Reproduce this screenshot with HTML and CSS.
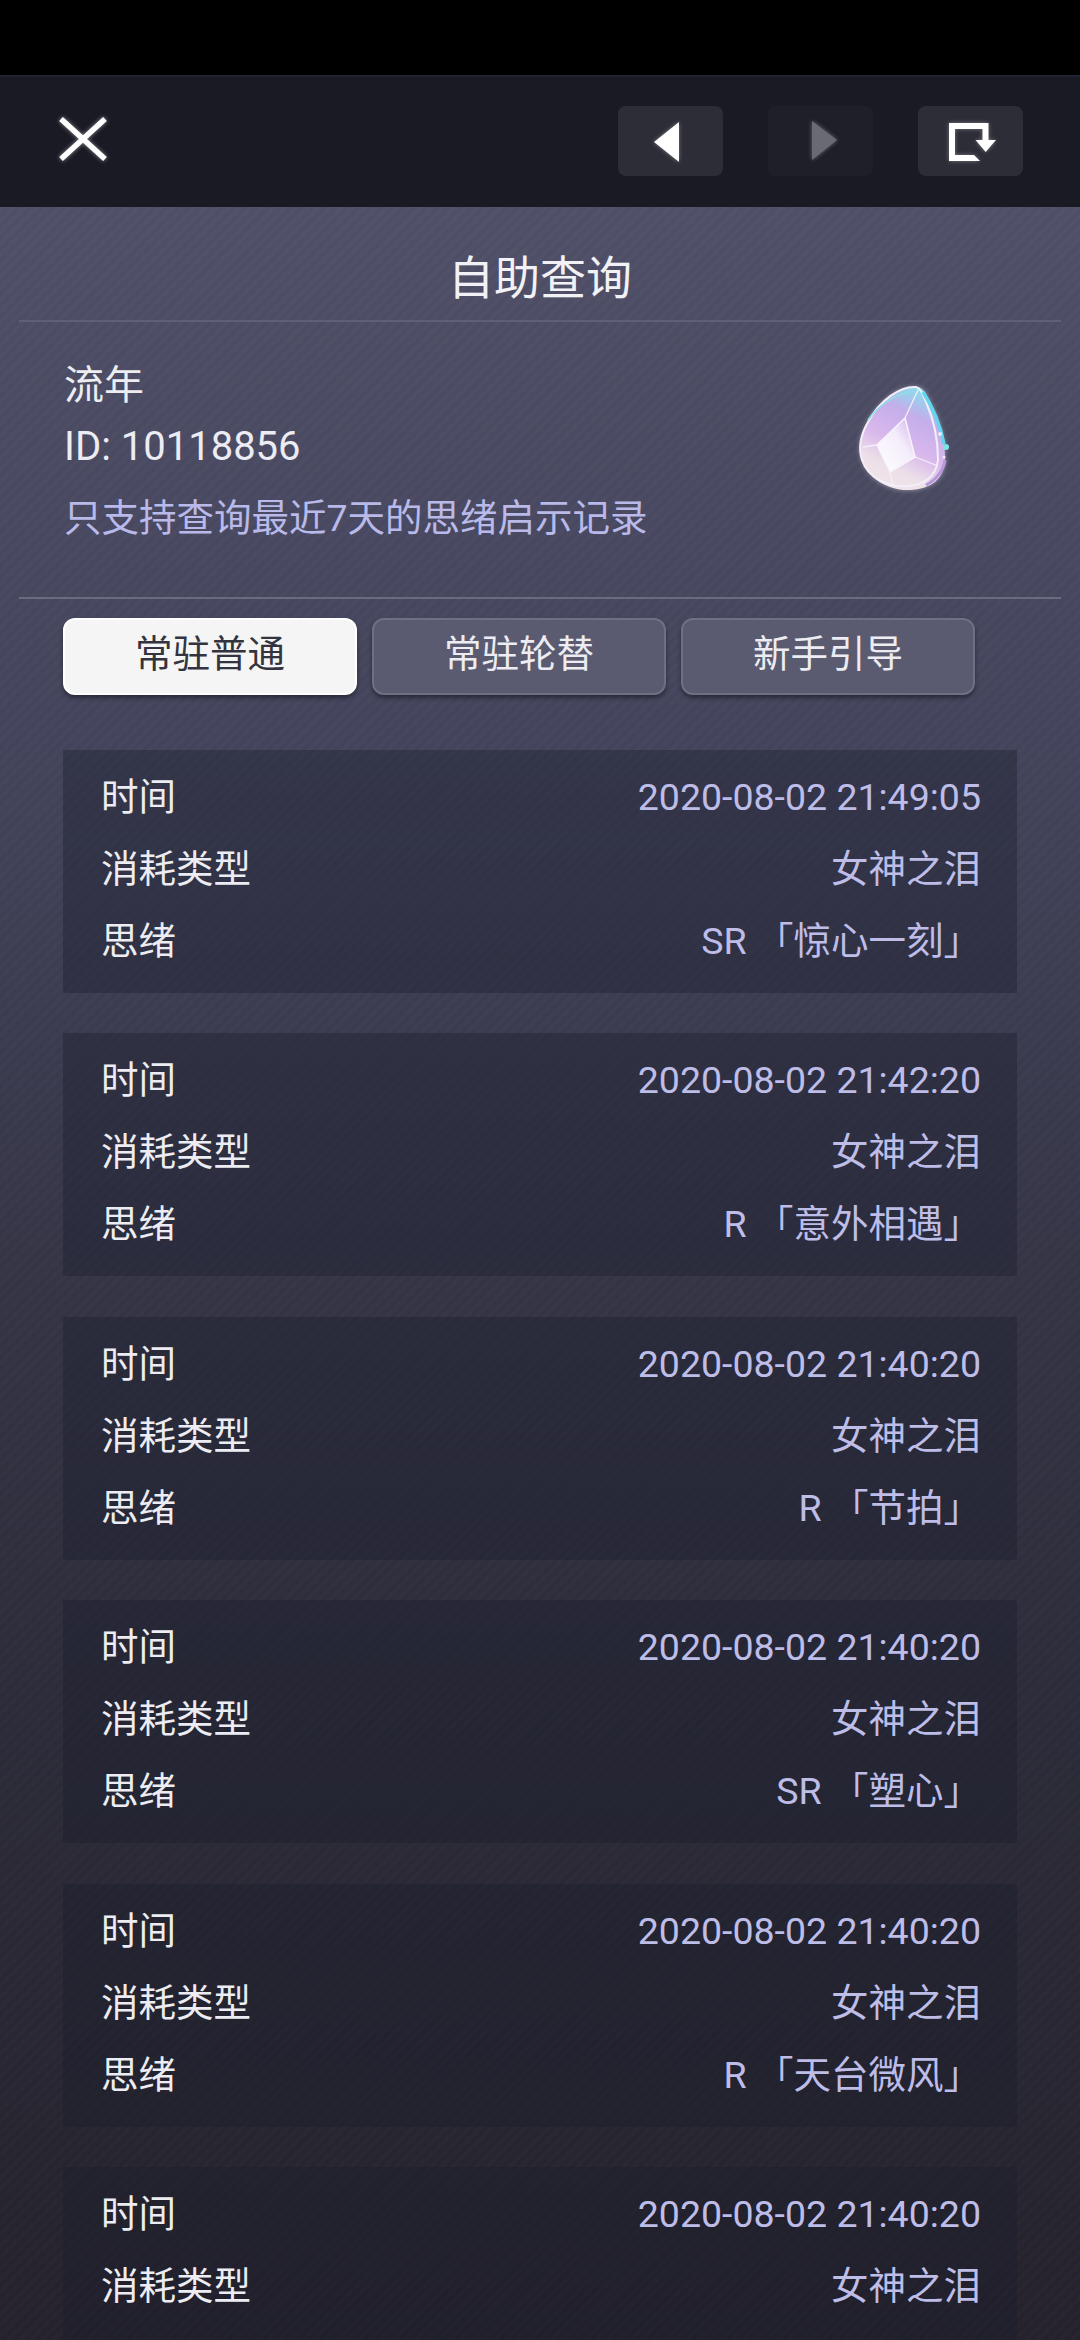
FILE: index.html
```html
<!DOCTYPE html>
<html>

<head>
  <meta charset="utf-8">
  <title>自助查询</title>
  <link rel="stylesheet" href="styles.css">
</head>

<body>
  <div class="status"></div>

  <div class="topbar">
    <svg class="close" viewBox="0 0 50 44">
      <path d="M3 2 L47 42 M47 2 L3 42" />
    </svg>
    <div class="nav">
      <div class="nav-btn">
        <svg viewBox="0 0 105 70"><polygon points="61,16 36,36 61,56" fill="#fff" /></svg>
      </div>
      <div class="nav-btn off">
        <svg viewBox="0 0 105 70"><polygon points="44,15 69,34 44,54" fill="#6a6b72" /></svg>
      </div>
      <div class="nav-btn">
        <svg viewBox="0 0 105 70">
          <path d="M55 52 H34 V20 H67.5 V36" fill="none" stroke="#fff" stroke-width="6" />
          <polygon points="50,49 56,49 62,55 50,55" fill="#fff" />
          <polygon points="57.5,34 78,34 67.7,46" fill="#fff" />
        </svg>
      </div>
    </div>
  </div>

  <div class="panel">
    <h1 class="title">自助查询</h1>

    <div class="info">
      <div class="info-text">
        <div class="name">流年</div>
        <div class="name">ID: 10118856</div>
        <div class="hint">只支持查询最近7天的思绪启示记录</div>
      </div>
      <!-- 女神之泪 gem -->
      <svg class="gem" viewBox="70 40 100 120">
        <defs>
          <linearGradient id="gemFill" x1="0.75" y1="0" x2="0.35" y2="1">
            <stop offset="0" stop-color="#7fe4ee" />
            <stop offset="0.28" stop-color="#c4aeea" />
            <stop offset="0.58" stop-color="#d9b8ec" />
            <stop offset="0.8" stop-color="#ecdfe8" />
            <stop offset="1" stop-color="#f1e4e8" />
          </linearGradient>
          <linearGradient id="gemCore" x1="0" y1="1" x2="1" y2="0">
            <stop offset="0" stop-color="#ffffff" />
            <stop offset="0.6" stop-color="#f4ecfb" />
            <stop offset="1" stop-color="#cfaef0" />
          </linearGradient>
          <filter id="soft" x="-20%" y="-20%" width="140%" height="140%">
            <feGaussianBlur stdDeviation="0.6" />
          </filter>
          <filter id="halo" x="-20%" y="-20%" width="140%" height="140%">
            <feGaussianBlur stdDeviation="2.5" />
          </filter>
        </defs>
        <path d="M136 47 C120 46 100 60 88 82 C80 96 78 108 82 120 C88 138 108 151 130 150 C150 149 165 140 165 118 C165 100 160 80 150 62 C146 52 142 47 136 47 Z" fill="#e6ddf2" opacity="0.55" filter="url(#halo)" />
        <g filter="url(#soft)">
          <path d="M136 47 C120 46 100 60 88 82 C80 96 78 108 82 120 C88 138 108 151 130 150 C150 149 165 140 165 118 C165 100 160 80 150 62 C146 52 142 47 136 47 Z" fill="url(#gemFill)" />
          <path d="M136 47 C120 46 100 60 88 82 C80 96 78 108 82 120 C88 138 108 148 128 146 C142 145 156 138 158 120 C158 100 154 80 146 62 C142 52 140 48 136 47 Z" fill="none" stroke="#f4eef8" stroke-width="2" />
          <path d="M88 80 C98 66 112 56 130 52" fill="none" stroke="#8fe0e4" stroke-width="1.6" />
          <path d="M143 52 C152 66 160 84 164 104" fill="none" stroke="#63d6ee" stroke-width="3.5" />
          <path d="M146 145 C156 140 164 130 165 120" fill="none" stroke="#b896dc" stroke-width="3" />
          <polygon points="125,78 97,105 110,132 135,117" fill="url(#gemCore)" stroke="#f8f2fc" stroke-width="1.6" />
          <path d="M125 78 L138 50 M97 105 L83 107 M110 132 L113 146 M135 117 L158 126" stroke="#f6eefa" stroke-width="1.3" fill="none" />
          <circle cx="166" cy="107" r="3" fill="#7fe3e6" />
          <circle cx="160" cy="94" r="2" fill="#f2e6f8" />
          <circle cx="164" cy="117" r="1.6" fill="#f2e6f8" />
        </g>
      </svg>
    </div>

    <div class="tabs">
      <div class="tab active">常驻普通</div>
      <div class="tab">常驻轮替</div>
      <div class="tab">新手引导</div>
    </div>

    <div class="records">
      <div class="card">
        <div class="row"><span>时间</span><span class="val">2020-08-02 21:49:05</span></div>
        <div class="row"><span>消耗类型</span><span class="val">女神之泪</span></div>
        <div class="row"><span>思绪</span><span class="val">SR 「惊心一刻」</span></div>
      </div>
      <div class="card">
        <div class="row"><span>时间</span><span class="val">2020-08-02 21:42:20</span></div>
        <div class="row"><span>消耗类型</span><span class="val">女神之泪</span></div>
        <div class="row"><span>思绪</span><span class="val">R 「意外相遇」</span></div>
      </div>
      <div class="card">
        <div class="row"><span>时间</span><span class="val">2020-08-02 21:40:20</span></div>
        <div class="row"><span>消耗类型</span><span class="val">女神之泪</span></div>
        <div class="row"><span>思绪</span><span class="val">R 「节拍」</span></div>
      </div>
      <div class="card">
        <div class="row"><span>时间</span><span class="val">2020-08-02 21:40:20</span></div>
        <div class="row"><span>消耗类型</span><span class="val">女神之泪</span></div>
        <div class="row"><span>思绪</span><span class="val">SR 「塑心」</span></div>
      </div>
      <div class="card">
        <div class="row"><span>时间</span><span class="val">2020-08-02 21:40:20</span></div>
        <div class="row"><span>消耗类型</span><span class="val">女神之泪</span></div>
        <div class="row"><span>思绪</span><span class="val">R 「天台微风」</span></div>
      </div>
      <div class="card">
        <div class="row"><span>时间</span><span class="val">2020-08-02 21:40:20</span></div>
        <div class="row"><span>消耗类型</span><span class="val">女神之泪</span></div>
      </div>
    </div>
  </div>
</body>

</html>
```

FILE: styles.css
```css
html, body {
  margin: 0;
  padding: 0;
}

body {
  width: 1080px;
  height: 2340px;
  overflow: hidden;
  display: flex;
  flex-direction: column;
  background-color: #000;
  color: #ececf2;
  font-family: Roboto, "Noto Sans CJK SC", sans-serif;
  font-size: 37.5px;
}

.status {
  height: 75px;
  flex: none;
  background-color: #000;
}

/* top bar */
.topbar {
  height: 132px;
  flex: none;
  box-sizing: border-box;
  padding: 29px 57px 0 58px;
  display: flex;
  justify-content: space-between;
  align-items: flex-start;
  background-color: #191a24;
  border-top: 2px solid #1f2030;
}

.close {
  width: 50px;
  height: 44px;
  margin-top: 11px;
  filter: drop-shadow(0 0 2px rgba(255, 255, 255, 0.5));
}

.close path {
  stroke: #fff;
  stroke-width: 5.5;
  fill: none;
}

.nav {
  display: flex;
  gap: 45px;
}

.nav-btn {
  width: 105px;
  height: 70px;
  border-radius: 8px;
  background-color: #2c2d37;
}

.nav-btn.off {
  background-color: #1e1f29;
}

.nav-btn svg {
  display: block;
  width: 105px;
  height: 70px;
  filter: drop-shadow(0 0 2px rgba(255, 255, 255, 0.35));
}

/* main panel */
.panel {
  flex: 1;
  min-height: 0;
  overflow: hidden;
  background-image:
    repeating-linear-gradient(135deg, rgba(255, 255, 255, 0.012) 0 4px, rgba(0, 0, 0, 0.012) 4px 8px),
    linear-gradient(180deg, #505169 0%, #44455c 25%, #353546 50%, #2b2a37 75%, #25222c 100%);
}

.title {
  margin: 0 19px;
  height: 115px;
  box-sizing: border-box;
  padding-top: 36px;
  font-size: 46px;
  font-weight: normal;
  line-height: 70px;
  text-align: center;
  color: #f2f2f6;
  border-bottom: 2px solid #5f6078;
}

.info {
  margin: 0 19px;
  height: 277px;
  box-sizing: border-box;
  padding: 33px 111px 0 45px;
  display: flex;
  justify-content: space-between;
  align-items: flex-start;
  border-bottom: 2px solid #6a6b80;
}

.name {
  font-size: 40px;
  line-height: 61px;
}

.hint {
  margin-top: 5px;
  line-height: 72px;
  color: #b9b9ea;
}

.gem {
  width: 100px;
  height: 120px;
  margin-top: 25px;
}

.tabs {
  display: flex;
  gap: 15px;
  padding: 19px 0 0 63px;
}

.tab {
  width: 294px;
  height: 77px;
  box-sizing: border-box;
  border-radius: 12px;
  line-height: 68px;
  text-align: center;
  background-color: #5a5b70;
  border: 2px solid #6e6f84;
  box-shadow: 0 3px 4px rgba(0, 0, 0, 0.4);
}

.tab.active {
  background-color: #f5f5f5;
  border-color: #fff;
  color: #33343f;
}

/* query records */
.records {
  display: flex;
  flex-direction: column;
  gap: 40.4px;
  padding: 55px 63px 0;
}

.card {
  min-height: 243px;
  box-sizing: border-box;
  padding: 11px 36px 0 38px;
  background-color: rgba(26, 28, 46, 0.38);
  flex: none;
}

.row {
  height: 72px;
  line-height: 72px;
  display: flex;
  justify-content: space-between;
}

.val {
  color: #bdbde8;
}
```
